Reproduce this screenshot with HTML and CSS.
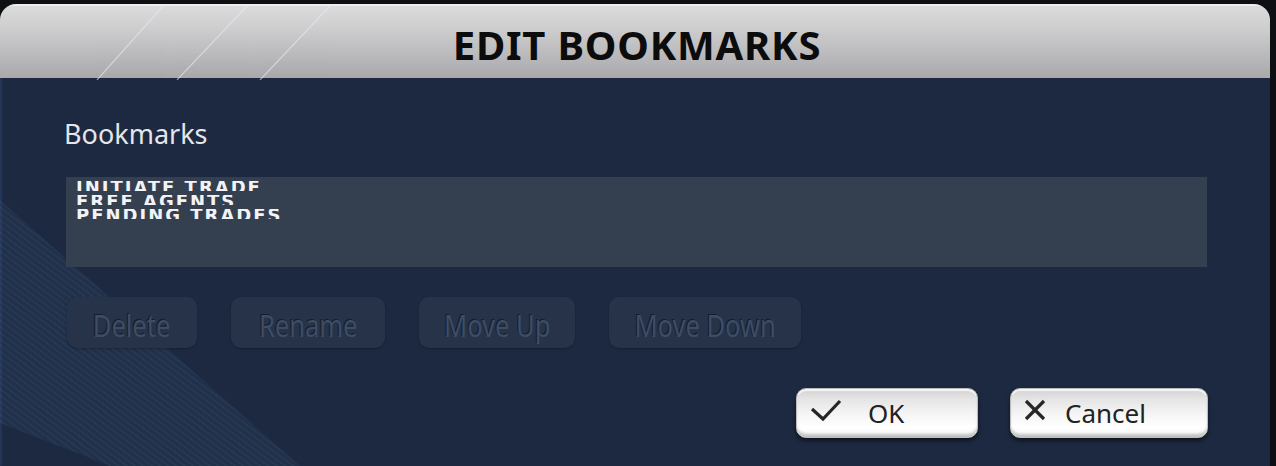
FILE: index.html
```html
<!DOCTYPE html>
<html>
<head>
<meta charset="utf-8">
<link rel="stylesheet" href="styles.css">
</head>
<body>
<div class="dialog">
  <div class="titlebar">
    <svg class="title-lines" width="400" height="74" viewBox="0 0 400 74">
      <line x1="163" y1="0" x2="97" y2="74"/>
      <line x1="247" y1="0" x2="177" y2="74"/>
      <line x1="330" y1="0" x2="260" y2="74"/>
    </svg>
    <h1 class="title">EDIT BOOKMARKS</h1>
  </div>
  <div class="content">
    <div class="stripe"></div>
    <div class="label">Bookmarks</div>
    <div class="list">
      <div class="row"><span>INITIATE TRADE</span></div>
      <div class="row"><span>FREE AGENTS</span></div>
      <div class="row"><span>PENDING TRADES</span></div>
    </div>
    <div class="actions">
      <button class="dbtn w-delete"><span>Delete</span></button>
      <button class="dbtn w-rename"><span>Rename</span></button>
      <button class="dbtn w-up"><span>Move Up</span></button>
      <button class="dbtn w-down"><span>Move Down</span></button>
    </div>
    <div class="footer">
      <button class="pbtn ok">
        <svg class="ico" width="32" height="24" viewBox="0 0 32 24"><polyline points="2,11 13,21 30,3"/></svg>
        <span class="ok-text">OK</span>
      </button>
      <button class="pbtn cancel">
        <svg class="ico" width="24" height="24" viewBox="0 0 24 24"><line x1="3" y1="3" x2="21" y2="21"/><line x1="21" y1="3" x2="3" y2="21"/></svg>
        <span class="cancel-text">Cancel</span>
      </button>
    </div>
  </div>
</div>
</body>
</html>
```

FILE: styles.css
```css
html, body {
  margin: 0;
  padding: 0;
  background: #0e0f12;
  width: 1276px;
  height: 466px;
  overflow: hidden;
  font-family: "Noto Sans", "Open Sans", sans-serif;
}

.dialog {
  margin-top: 4px;
  width: 1270px;
  height: 470px;
  display: flex;
  flex-direction: column;
  border-radius: 16px 16px 10px 10px;
  overflow: hidden;
  background: #1c2940;
}

.titlebar {
  position: relative;
  height: 74px;
  flex: none;
  background: linear-gradient(#dcdbdc 0%, #cfcecf 30%, #b9b8ba 70%, #a9a8ab 100%);
  border-top: 2px solid #ececec;
  box-sizing: border-box;
  display: flex;
  align-items: center;
  justify-content: center;
}

.title-lines {
  position: absolute;
  left: 0;
  top: 0;
}
.title-lines line {
  stroke: #e8eaf4;
  stroke-width: 1.2;
  opacity: 0.6;
}

.title {
  margin: 0;
  padding-left: 4px;
  padding-top: 4px;
  font-size: 40px;
  font-weight: 700;
  letter-spacing: 0.8px;
  color: #0c0c0c;
  position: relative;
}

.content {
  position: relative;
  flex: 1;
  padding: 0 63px 0 65px;
  border-left: 2px solid #22345a;
}

.stripe {
  position: absolute;
  left: -2px;
  top: 0;
  width: 320px;
  height: 400px;
  background:
    repeating-linear-gradient(37deg, rgba(255,255,255,0.025) 0 2px, rgba(0,0,0,0.03) 2px 5px),
    rgba(60, 100, 145, 0.16);
  clip-path: polygon(0 122px, 300px 388px, 110px 388px, 0 345px);
}

.label {
  position: relative;
  margin-left: -3px;
  padding-top: 39px;
  height: 99px;
  box-sizing: border-box;
  font-size: 27px;
  line-height: 34px;
  color: #e4e6ea;
}

.list {
  position: relative;
  margin-left: -1px;
  height: 90px;
  background: #343f50;
  padding: 4px 10px 0;
  box-sizing: border-box;
}

.row {
  height: 10px;
  overflow: hidden;
  margin-bottom: 4px;
  line-height: 10px;
}
.row span {
  font-family: "DejaVu Sans", sans-serif;
  font-stretch: condensed;
  font-weight: 700;
  font-size: 20px;
  letter-spacing: 2px;
  color: #f2f3f5;
  display: inline-block;
  transform: translateY(1px);
}

.actions {
  position: relative;
  display: flex;
  gap: 34px;
  margin-top: 30px;
  height: 51px;
}

.dbtn {
  height: 51px;
  border: none;
  border-radius: 10px;
  background: #263349;
  box-shadow: 0 1px 2px rgba(0,0,0,0.25);
  font-family: "Noto Sans", sans-serif;
  font-size: 26px;
  color: #3e4c64;
  text-shadow: -1px -1px 0 #141d2c;
  padding: 0;
}
.dbtn span {
  display: inline-block;
  transform: scale(0.98, 1.18);
  padding-top: 4px;
}
.dbtn.w-delete { width: 130px; }
.dbtn.w-rename { width: 154px; }
.dbtn.w-up { width: 156px; }
.dbtn.w-down { width: 192px; }

.footer {
  position: relative;
  display: flex;
  justify-content: flex-end;
  gap: 32px;
  margin-top: 40px;
  margin-right: -1px;
}

.pbtn {
  height: 50px;
  border: 1px solid #bdbdbd;
  border-radius: 10px;
  background: linear-gradient(#d2d2d2 0%, #e4e4e4 20%, #f4f4f4 50%, #ffffff 80%, #f6f6f6 100%);
  box-shadow: 0 3px 4px rgba(0,0,0,0.5), inset 0 -4px 3px -1px rgba(0,0,0,0.22), inset 0 2px 1px rgba(255,255,255,0.8);
  display: flex;
  align-items: center;
  padding: 0;
  font-family: "Noto Sans", sans-serif;
  font-size: 26px;
  color: #222;
}
.pbtn .ico {
  flex: none;
  stroke: #262626;
  stroke-width: 3.2;
  fill: none;
}
.ok { width: 182px; padding-left: 13px; }
.ok .ico { margin-top: -6px; }
.ok-text { margin-left: 26px; }
.cancel { width: 198px; padding-left: 12px; }
.cancel .ico { margin-top: -6px; }
.cancel-text { margin-left: 18px; }
```
